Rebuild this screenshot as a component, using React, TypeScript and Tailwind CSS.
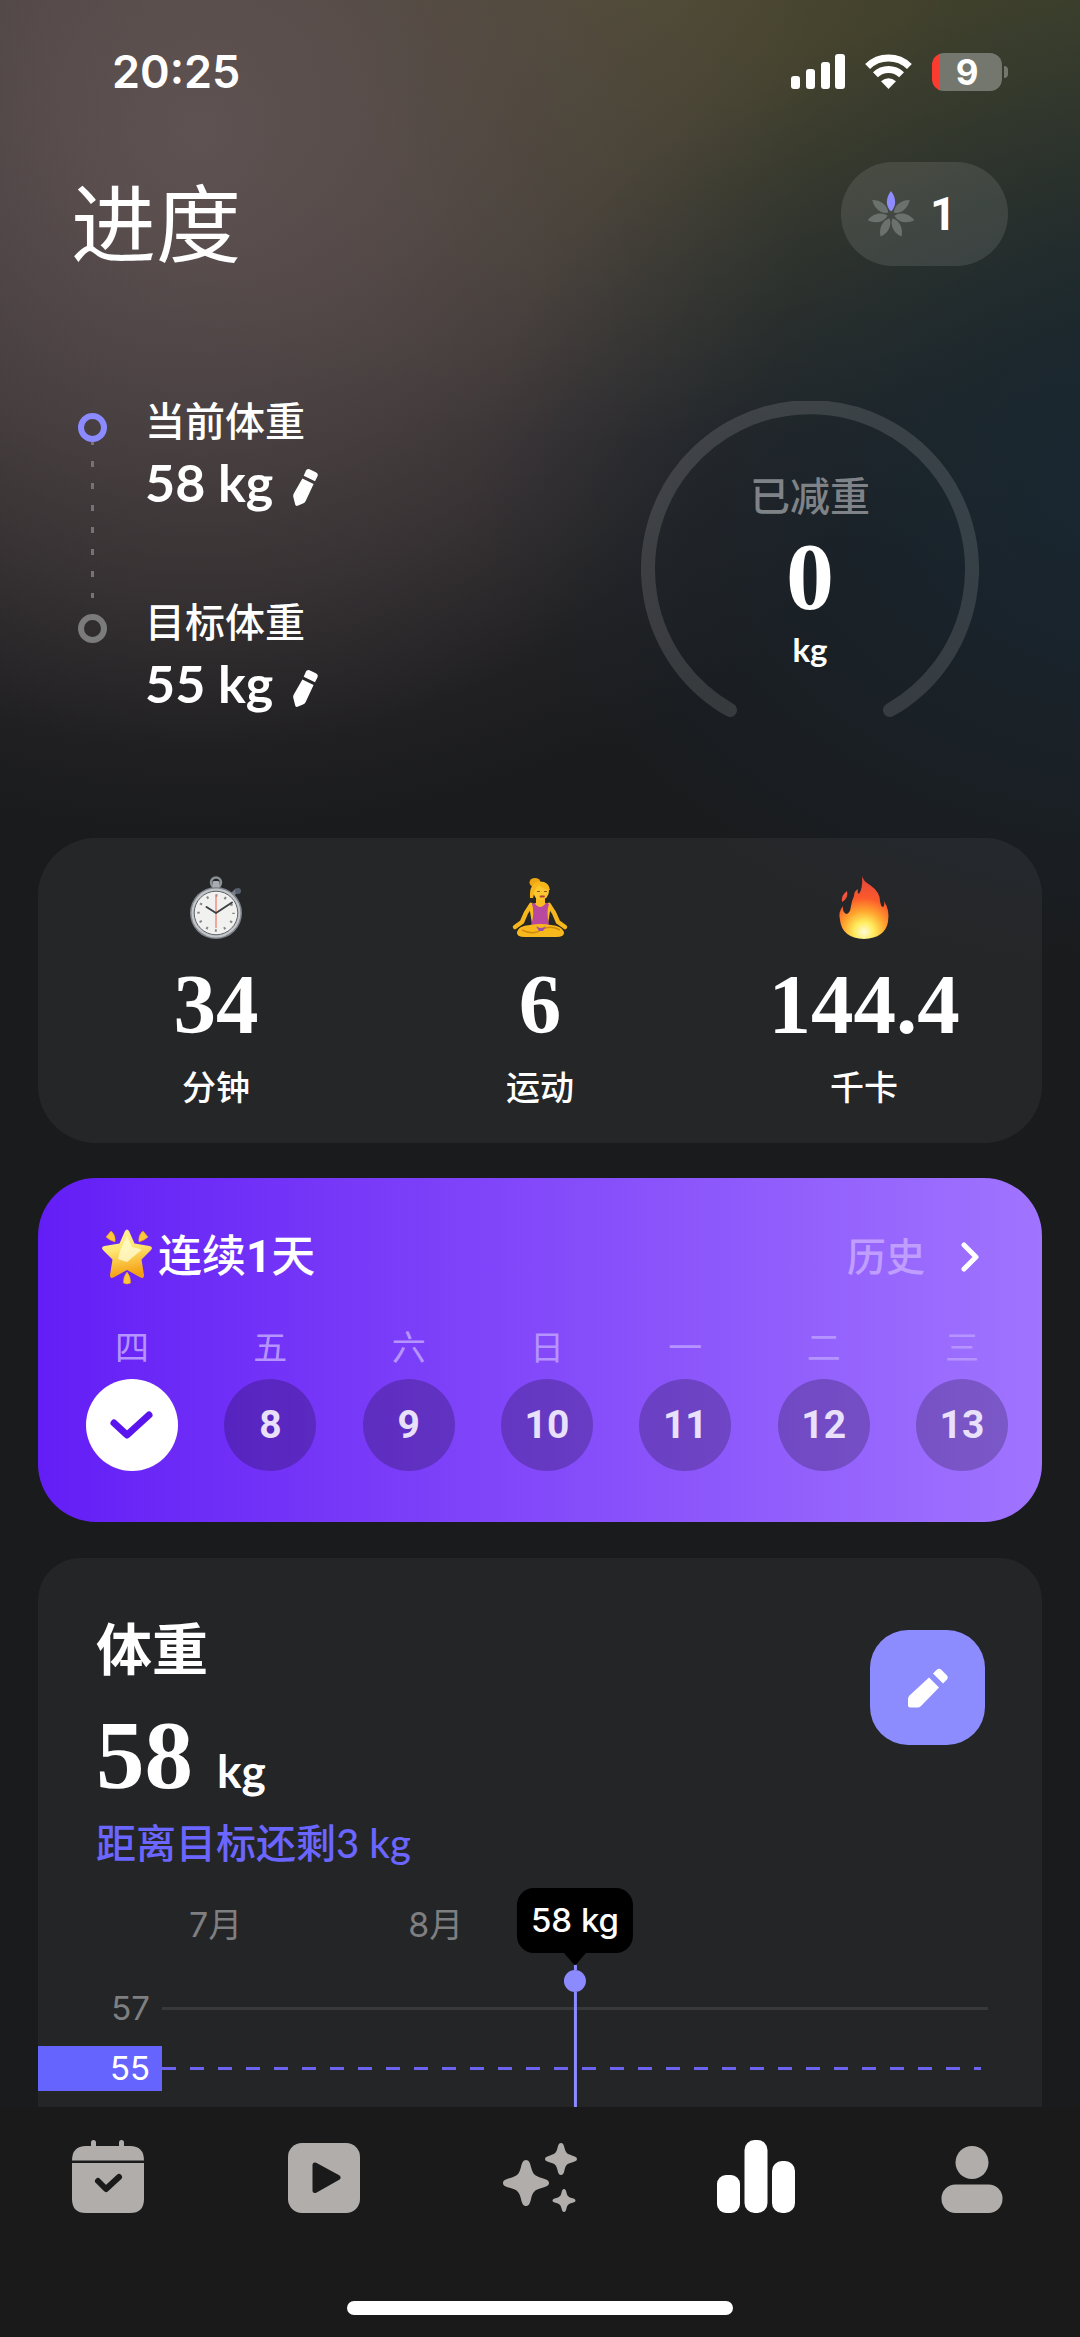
import type { ReactNode } from "react";

const cjk = "font-['Inter','Noto_Sans_CJK_SC',sans-serif]";
const serif = "font-['Liberation_Serif',serif] font-bold";
const geo = "font-['Lato','Noto_Sans_CJK_SC',sans-serif]";
const digits = "font-['Roboto','Noto_Sans_CJK_SC',sans-serif]";

function StatusBar() {
  return (
    <div className="flex h-[144px] shrink-0 items-center justify-between pr-[72px] pl-[112px]">
      <time className="text-[45px] leading-[48px] font-semibold">20:25</time>
      <div className="flex items-center gap-5">
        <svg width="54" height="36" viewBox="0 0 54 36" fill="#fff" aria-label="信号">
          <rect x="0" y="22" width="9" height="13" rx="3" />
          <rect x="15" y="15" width="9" height="20" rx="3" />
          <rect x="30" y="8" width="9" height="27" rx="3" />
          <rect x="44" y="0" width="10" height="35" rx="3" />
        </svg>
        <svg width="47" height="36" viewBox="0 0 47 36" aria-label="Wi-Fi">
          <g fill="none" stroke="#fff" strokeWidth="7">
            <path d="M2.600 12.500A30 30 0 0 1 44.400 12.500" />
            <path d="M10.400 20.800A19 19 0 0 1 36.600 20.800" />
          </g>
          <path d="M23.500 35L16 27.300Q23.500 21 31 27.300Z" fill="#fff" />
        </svg>
        <div className="flex items-center gap-[2px]">
          <div className="flex w-[70px] justify-center rounded-[12px] bg-[linear-gradient(90deg,#fb3b30_7px,#73776e_7px)] text-[35px] leading-[38px] font-bold">
            9
          </div>
          <div className="h-[12px] w-[4px] rounded-r-full bg-[#73776e]" />
        </div>
      </div>
    </div>
  );
}

function Flower() {
  return (
    <svg width="48" height="50" viewBox="-24 -26 48 50" aria-hidden="true">
      {[0, 1, 2, 3, 4, 5, 6].map((i) => (
        <path
          key={i}
          d="M0 -3.500C-6 -9 -5 -18 0 -24C5 -18 6 -9 0 -3.500Z"
          fill={i === 0 ? "#8f8cff" : "#6b716c"}
          transform={`rotate(${(i * 360) / 7})`}
        />
      ))}
    </svg>
  );
}

function SmallPencil() {
  return (
    <svg width="26" height="40" viewBox="0 0 26 40" fill="#fff" aria-hidden="true">
      <path d="M13 2.500Q14 .3 16.500 1.200L22.800 4.300Q25.400 5.700 24.600 8L22 13.300L10.700 7.800Z" />
      <path d="M9.400 10.400L20.600 15.900L12.800 32.800Q12 34.700 10 35.500L4.500 37.800Q2.600 38.400 2.200 36.500L.2 28.500Q0 27 .8 25.500Z" />
    </svg>
  );
}

function WeightEntry({ label, value, ring, last }: { label: string; value: string; ring: string; last?: boolean }) {
  return (
    <li className="flex gap-[38px]">
      <div className="flex w-[30px] flex-col items-center pt-[16px]">
        <span className={`size-[29px] shrink-0 rounded-full border-[6px] ${ring}`} />
        {!last && (
          <span className="w-[3px] grow bg-[repeating-linear-gradient(180deg,#757375_0_6px,transparent_6px_22px)] bg-[position:0_-3px]" />
        )}
      </div>
      <div className={last ? "" : "pb-[85px]"}>
        <div className="text-[40px] leading-[50px] font-medium">{label}</div>
        <div className="mt-[4px] flex items-start gap-[20px]">
          <span className={`${geo} text-[52px] leading-[62px] font-bold`}>{value}</span>
          <button type="button" aria-label={`编辑${label}`} className="mt-[17px]">
            <SmallPencil />
          </button>
        </div>
      </div>
    </li>
  );
}

function Gauge() {
  return (
    <div className="relative size-[338px]">
      <svg width="338" height="338" viewBox="0 0 338 338" className="absolute inset-0" aria-hidden="true">
        <path d="M89 309A162 162 0 1 1 249 309" fill="none" stroke="#fff" strokeOpacity=".13" strokeWidth="14" strokeLinecap="round" />
      </svg>
      <div className="flex flex-col items-center pt-[71px]">
        <span className="text-[40px] leading-[50px] font-medium text-[#7f8388]">已减重</span>
        <span className={`${serif} mt-[5px] text-[96px] leading-[100px]`}>0</span>
        <span className={`${geo} mt-[2px] text-[33px] leading-[40px] font-bold`}>kg</span>
      </div>
    </div>
  );
}

function Stopwatch() {
  return (
    <svg width="64" height="64" viewBox="0 0 64 64" aria-hidden="true">
      <circle cx="32" cy="6.500" r="5" fill="none" stroke="#8b9095" strokeWidth="2.500" />
      <rect x="28.500" y="5" width="7" height="8" rx="1.500" fill="#a9adb3" />
      <path d="M48 19L53 14" stroke="#777c84" strokeWidth="4" />
      <circle cx="54" cy="15" r="3" fill="#56606f" />
      <circle cx="32" cy="37" r="26" fill="#7f858b" />
      <circle cx="32" cy="37" r="24.500" fill="#c2c6c9" />
      <circle cx="32" cy="37" r="21.800" fill="#f1f1f0" stroke="#5d6268" strokeWidth="1" />
      <circle cx="32" cy="37" r="17.500" fill="none" stroke="#85858a" strokeWidth="2.500" strokeDasharray="2 7.160" strokeDashoffset="1" />
      <path d="M32 19V52" stroke="#f08072" strokeWidth="1.300" />
      <path d="M32 37L22.500 31M32 37L48 26.500" stroke="#3d4245" strokeWidth="2" strokeLinecap="round" />
    </svg>
  );
}

function Yoga() {
  return (
    <svg width="64" height="64" viewBox="0 0 64 64" aria-hidden="true">
      <path d="M23 29Q17 37 14 46L7 51" fill="none" stroke="#f6b71c" strokeWidth="4.500" strokeLinecap="round" strokeLinejoin="round" />
      <path d="M41 29Q47 37 50 46L57 51" fill="none" stroke="#f6b71c" strokeWidth="4.500" strokeLinecap="round" strokeLinejoin="round" />
      <path d="M28 20H37V27L43 29L40 48H24L21 29L28 27Z" fill="#f9bd21" />
      <path d="M24 28L26.500 27Q32 35 38 27L41 28Q38 35 41 50H23Q27 36 24 28Z" fill="#b9489f" />
      <path d="M9 56Q10 50 22 49Q32 47 43 49Q54 50 56 56Q57 61 48 61H17Q8 61 9 56Z" fill="#f7b81d" />
      <path d="M14 54Q26 60 34 53Q44 49 52 54" fill="none" stroke="#d18b0b" strokeWidth="1.500" />
      <path d="M28 50Q33 54 38 50L35 55H31Z" fill="#9c4cb0" />
      <ellipse cx="27" cy="6.500" rx="5.500" ry="4.500" fill="#f0a514" />
      <ellipse cx="33" cy="15" rx="8" ry="9" fill="#fbc62f" />
      <path d="M22 22Q21 7 31 5.500Q41 5 42 14Q36 14 31 9Q26 13 26 18L25 22Z" fill="#f9b61b" />
      <path d="M29 15.500H32M36 15.500H39" stroke="#8a5a13" strokeWidth="1.200" />
      <path d="M32.500 20.500H36" stroke="#b4423c" strokeWidth="1.800" strokeLinecap="round" />
    </svg>
  );
}

function Fire() {
  return (
    <svg width="64" height="64" viewBox="0 0 64 64" aria-hidden="true">
      <defs>
        <radialGradient id="flame" gradientUnits="userSpaceOnUse" cx="32" cy="56" r="50">
          <stop offset="0" stopColor="#fffbd8" />
          <stop offset=".2" stopColor="#ffec5c" />
          <stop offset=".42" stopColor="#ffa62e" />
          <stop offset=".68" stopColor="#fb5a2b" />
          <stop offset="1" stopColor="#e94a3a" />
        </radialGradient>
      </defs>
      <path
        d="M30 0Q31 5 38 9Q48 16 48 25Q49 31 51 31Q53 29 52 25Q58 34 56 46Q53 62 32 63Q10 62 8 44Q6 36 11 30Q10 35 14 38Q18 38 19 30Q20 24 22 20Q22 15 26 13Q25 17 27 18Q31 12 30 0Z"
        fill="url(#flame)"
      />
      <path d="M15 15Q17 22 10 26Q9 19 15 15Z" fill="#ef553d" />
    </svg>
  );
}

function GlowStar() {
  return (
    <svg width="52" height="56" viewBox="0 0 52 56" aria-hidden="true">
      <defs>
        <linearGradient id="star" x1="0" y1="0" x2=".2" y2="1">
          <stop offset="0" stopColor="#fff3a0" />
          <stop offset=".45" stopColor="#ffe873" />
          <stop offset="1" stopColor="#f5a013" />
        </linearGradient>
      </defs>
      <g fill="#ffc83c" stroke="#ea9c16" strokeWidth=".6">
        <path d="M10 2Q15 6 14 13Q8 11 5 8Z" />
        <path d="M42 2Q37 6 38 13Q44 11 47 8Z" />
        <path d="M26 43Q30 48 29.500 54Q26 56 22.500 54Q22 48 26 43Z" />
      </g>
      <path
        d="M24 2Q26 -1 28 2L33.500 14.500L48.500 17Q52.500 18 50 21L40.500 30.500L43 46Q43 50 39.500 48.500L26 41L12.500 48.500Q9 50 9 46L11.500 30.500L2 21Q-.5 18 3.500 17L18.500 14.500Z"
        fill="url(#star)"
      />
      <path d="M26 7L31 18L41 20.500L32 28L26 33L17 30L19 22Z" fill="#fffbd0" opacity=".8" />
    </svg>
  );
}

function Stat({ icon, value, label }: { icon: ReactNode; value: string; label: string }) {
  return (
    <div className="flex flex-1 flex-col items-center">
      {icon}
      <span className={`${serif} mt-[18px] text-[85px] leading-[92px]`}>{value}</span>
      <span className="mt-[16px] text-[34px] leading-[44px] font-medium">{label}</span>
    </div>
  );
}

const week = [
  { name: "四", day: "7", done: true },
  { name: "五", day: "8" },
  { name: "六", day: "9" },
  { name: "日", day: "10" },
  { name: "一", day: "11" },
  { name: "二", day: "12" },
  { name: "三", day: "13" },
];

function StreakCard() {
  return (
    <section className="mx-[38px] mt-[35px] h-[344px] shrink-0 rounded-[58px] bg-[linear-gradient(90deg,#631ef6_0%,#7738f8_30%,#8c56fb_65%,#a074ff_100%)] pt-[47px]">
      <div className="flex items-center justify-between pr-[62px] pl-[63px]">
        <h2 className="flex items-center gap-[5px] text-[44px] leading-[64px] font-medium">
          <GlowStar />
          <span className={digits}>
            连续<b className="font-bold">1</b>天
          </span>
        </h2>
        <a href="#history" className="flex items-center gap-[35px] text-[39px] leading-[64px] font-medium text-[#bf9eff]">
          历史
          <svg width="20" height="30" viewBox="0 0 20 30" fill="none" stroke="#fff" strokeWidth="5" strokeLinecap="round" strokeLinejoin="round" aria-hidden="true">
            <path d="M4 3L16 15L4 27" />
          </svg>
        </a>
      </div>
      <ol className="mt-[35px] flex justify-between pr-[34px] pl-[48px]">
        {week.map((d) => (
          <li key={d.name} className="flex w-[92px] flex-col items-center gap-[7px]">
            <span className="text-[34px] leading-[48px] text-[#b694ff]">{d.name}</span>
            {d.done ? (
              <span className="flex size-[92px] items-center justify-center rounded-full bg-white" aria-label={`${d.day}日已完成`}>
                <svg width="46" height="34" viewBox="0 0 46 34" fill="none" stroke="#5a14ee" strokeWidth="7" strokeLinecap="round" strokeLinejoin="round" aria-hidden="true">
                  <path d="M5 15L18 27L40 7" />
                </svg>
              </span>
            ) : (
              <span className={`${digits} flex size-[92px] items-center justify-center rounded-full bg-black/22 text-[39px] leading-[40px] font-bold text-[#e9e0fb]`}>
                {d.day}
              </span>
            )}
          </li>
        ))}
      </ol>
    </section>
  );
}

function WeightCard() {
  return (
    <section className="relative mx-[38px] mt-[36px] grow rounded-t-[42px] bg-[#242527] pt-[56px]">
      <div className="flex items-start justify-between pr-[57px] pl-[58px]">
        <div>
          <h2 className="text-[56px] leading-[72px] font-bold">体重</h2>
          <p className="mt-[20px] flex items-baseline gap-[24px] leading-[100px]">
            <span className={`${serif} text-[97px]`}>58</span>
            <span className={`${geo} text-[46px] font-bold`}>kg</span>
          </p>
        </div>
        <button type="button" aria-label="编辑体重" className="mt-[16px] flex size-[115px] items-center justify-center rounded-[38px] bg-[#8c8cff]">
          <svg width="42" height="42" viewBox="0 0 42 42" fill="#fff" aria-hidden="true">
            <path d="M26 6.500L29.500 3Q32 .5 34.500 3L39.500 8Q42 10.500 39.500 13L36 16.500Z" />
            <path d="M22 10.500L32 20.500L14 39Q12.500 40.500 10.500 40.500H3Q1 40.500 1 38.500V32Q1 30 2.500 28.500Z" />
          </svg>
        </button>
      </div>
      <p className={`${geo} -mt-[2px] pl-[58px] text-[40px] leading-[48px] font-medium text-[#6b66ff]`}>距离目标还剩3 kg</p>

      <div className="mt-[34px] text-[34px] text-[#7e7f81]">
        <div className="flex gap-[166px] pl-[151px] leading-[48px]">
          <span>7月</span>
          <span>8月</span>
        </div>
        <div className="mt-[37px] flex items-center">
          <span className="w-[124px] pr-[12px] text-right text-[33px] leading-[45px]">57</span>
          <span className="mr-[54px] h-[3px] grow bg-[#39393b]" />
        </div>
        <div className="mt-[15px] flex items-center">
          <span className="w-[124px] bg-[#6664ff] pr-[12px] text-right text-[33px] leading-[45px] text-white">55</span>
          <span className="mr-[61px] h-[3px] grow bg-[repeating-linear-gradient(90deg,#6c63f0_0_14px,transparent_14px_28px)]" />
        </div>
      </div>

      <div className="absolute top-[330px] bottom-0 left-[537px] flex -translate-x-1/2 flex-col items-center">
        <div className="rounded-[17px] bg-black px-[14px] text-[33px] leading-[65px] font-medium whitespace-nowrap">58 kg</div>
        <svg width="22" height="12" viewBox="0 0 22 12" aria-hidden="true">
          <path d="M0 0H22L12.500 11Q11 12.500 9.500 11Z" fill="#000" />
        </svg>
        <span className="h-[5px] w-[3px] bg-[#8c8aff]" />
        <span className="size-[22px] shrink-0 rounded-full bg-[#8c8aff]" />
        <span className="w-[3px] grow bg-[#8c8aff]" />
      </div>
    </section>
  );
}

const sparkle =
  "M0 -1C.12 -1 .18 -.88 .22 -.68C.3 -.38 .38 -.3 .68 -.22C.88 -.16 1 -.12 1 0C1 .12 .88 .16 .68 .22C.38 .3 .3 .38 .22 .68C.18 .88 .12 1 0 1C-.12 1 -.18 .88 -.22 .68C-.3 .38 -.38 .3 -.68 .22C-.88 .16 -1 .12 -1 0C-1 -.12 -.88 -.16 -.68 -.22C-.38 -.3 -.3 -.38 -.22 -.68C-.18 -.88 -.12 -1 0 -1Z";

const tabs: { label: string; active?: boolean; icon: ReactNode }[] = [
  {
    label: "计划",
    icon: (
      <>
        <path d="M4 24.500Q4 10 18 10H62Q76 10 76 24.500Z" />
        <path d="M4 27H76V63Q76 77 62 77H18Q4 77 4 63Z" />
        <rect x="23" y="4" width="5" height="12" rx="2.500" />
        <rect x="51" y="4" width="5" height="12" rx="2.500" />
        <path d="M30 45L38 53L51 41" fill="none" stroke="#1a1a1b" strokeWidth="6" strokeLinecap="round" strokeLinejoin="round" />
      </>
    ),
  },
  {
    label: "视频",
    icon: (
      <>
        <rect x="4" y="7" width="72" height="70" rx="14" />
        <path d="M31 29V54.500L54 41.500Z" fill="#1a1a1b" stroke="#1a1a1b" strokeWidth="5" strokeLinejoin="round" />
      </>
    ),
  },
  {
    label: "发现",
    icon: (
      <>
        <path d={sparkle} transform="translate(26 47) scale(23)" />
        <path d={sparkle} transform="translate(61 23) scale(16)" />
        <path d={sparkle} transform="translate(64 64.500) scale(11.500)" />
      </>
    ),
  },
  {
    label: "进度",
    active: true,
    icon: (
      <>
        <rect x="1" y="39" width="23" height="38" rx="9" />
        <rect x="28.500" y="4" width="23" height="73" rx="10" />
        <rect x="56" y="25" width="23" height="52" rx="10" />
      </>
    ),
  },
  {
    label: "我的",
    icon: (
      <>
        <circle cx="40" cy="26.500" r="16.500" />
        <rect x="9.500" y="48.500" width="61" height="28.500" rx="14" />
      </>
    ),
  },
];

function TabBar() {
  return (
    <nav className="flex shrink-0 flex-col items-center bg-[#1a1a1b] pt-[29px] pb-[22px]">
      <div className="flex w-full">
        {tabs.map((t) => (
          <button key={t.label} type="button" aria-label={t.label} className="flex flex-1 justify-center">
            <svg width="80" height="80" viewBox="0 0 80 80" className={t.active ? "fill-white" : "fill-[#b1adab]"} aria-hidden="true">
              {t.icon}
            </svg>
          </button>
        ))}
      </div>
      <div className="mt-[85px] h-[14px] w-[386px] rounded-full bg-white" />
    </nav>
  );
}

const glow =
  "bg-[radial-gradient(ellipse_700px_500px_at_1180px_480px,#192833_0%,transparent_100%),radial-gradient(ellipse_620px_620px_at_200px_130px,#5f5252_0%,#5d505080_50%,transparent_100%),radial-gradient(ellipse_720px_480px_at_640px_-40px,#504b32_0%,#4c492e90_45%,transparent_100%),radial-gradient(ellipse_700px_580px_at_1100px_0px,#323a2b_0%,transparent_100%),radial-gradient(ellipse_900px_840px_at_200px_0px,#4d4346_0%,transparent_100%)]";

export default function App() {
  return (
    <div className={`${cjk} ${glow} flex h-screen min-h-[2100px] flex-col overflow-hidden bg-[#1a1b1d] text-white`}>
      <StatusBar />
      <main className="flex min-h-0 grow flex-col">
        <header className="flex items-start justify-between pt-[18px] pr-[72px] pl-[71px]">
          <h1 className="text-[85px] leading-[128px] font-normal">进度</h1>
          <button type="button" aria-label="奖励 1" className="flex h-[104px] w-[167px] items-center gap-[15px] rounded-full bg-white/10 pl-[26px]">
            <Flower />
            <span className={`${digits} text-[46px] leading-[48px] font-bold`}>1</span>
          </button>
        </header>
        <section className="mt-[111px] flex justify-between pr-[101px] pl-[77px]">
          <ul className="-mt-[4px]">
            <WeightEntry label="当前体重" value="58 kg" ring="border-[#8c8aff]" />
            <WeightEntry label="目标体重" value="55 kg" ring="border-[#7b7b7c]" last />
          </ul>
          <Gauge />
        </section>
        <section className="mx-[38px] mt-[99px] flex h-[305px] shrink-0 rounded-[58px] bg-white/5 px-[16px] pt-[38px]">
          <Stat icon={<Stopwatch />} value="34" label="分钟" />
          <Stat icon={<Yoga />} value="6" label="运动" />
          <Stat icon={<Fire />} value="144.4" label="千卡" />
        </section>
        <StreakCard />
        <WeightCard />
      </main>
      <TabBar />
    </div>
  );
}
